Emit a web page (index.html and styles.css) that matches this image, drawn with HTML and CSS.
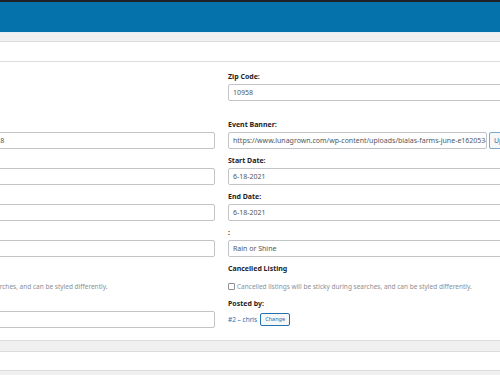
FILE: index.html
```html
<!DOCTYPE html>
<html>
<head>
<meta charset="utf-8">
<link rel="stylesheet" href="styles.css">
</head>
<body>
<div class="adminbar"></div>
<div class="masthead"></div>
<div class="tabs"></div>
<div class="panel-head"></div>
<div class="form">
  <div class="row row-first">
    <div class="cell"><div class="label">Location:</div></div>
    <div class="cell">
      <div class="label">Zip Code:</div>
      <div class="input">10958</div>
    </div>
  </div>
  <div class="row">
    <div class="cell">
      <div class="label">Event Title:</div>
      <div class="input">Strawberry Picking at Bialas Farms 06-18</div>
    </div>
    <div class="cell">
      <div class="label">Event Banner:</div>
      <div class="with-button">
        <div class="input">https://www.lunagrown.com/wp-content/uploads/bialas-farms-june-e1620534</div>
        <div class="btn">Upload</div>
      </div>
    </div>
  </div>
  <div class="row">
    <div class="cell">
      <div class="label">Website:</div>
      <div class="input"></div>
    </div>
    <div class="cell">
      <div class="label">Start Date:</div>
      <div class="input">6-18-2021</div>
    </div>
  </div>
  <div class="row">
    <div class="cell">
      <div class="label">Phone:</div>
      <div class="input"></div>
    </div>
    <div class="cell">
      <div class="label">End Date:</div>
      <div class="input">6-18-2021</div>
    </div>
  </div>
  <div class="row">
    <div class="cell">
      <div class="label">Email:</div>
      <div class="input"></div>
    </div>
    <div class="cell">
      <div class="label">:</div>
      <div class="input">Rain or Shine</div>
    </div>
  </div>
  <div class="row">
    <div class="cell">
      <div class="label">Featured Listing</div>
      <div class="check-row"><span class="checkbox"></span><span class="desc">Featured listings will be sticky during searches, and can be styled differently.</span></div>
    </div>
    <div class="cell">
      <div class="label">Cancelled Listing</div>
      <div class="check-row"><span class="checkbox"></span><span class="desc">Cancelled listings will be sticky during searches, and can be styled differently.</span></div>
    </div>
  </div>
  <div class="row row-last">
    <div class="cell">
      <div class="label">Expiry Date:</div>
      <div class="input"></div>
    </div>
    <div class="cell">
      <div class="label">Posted by:</div>
      <div class="posted"><span class="author">#2 – chris</span><span class="change">Change</span></div>
    </div>
  </div>
</div>
<div class="footer-band"></div>
<div class="footer-panel"></div>
<div class="footer-rest"></div>
</body>
</html>
```
FILE: styles.css
```css
html, body {
  margin: 0;
  padding: 0;
  background: #ffffff;
  overflow: hidden;
  font-family: "Noto Sans", "Open Sans", sans-serif;
}
.adminbar {
  height: 2px;
  background: #1d2327;
}
.masthead {
  height: 30px;
  background: #0572ab;
}
.tabs {
  height: 8px;
  background: #f0f0f1;
  border-top: 1px solid #e3edf4;
  border-bottom: 1px solid #dcdcde;
}
.panel-head {
  height: 19px;
  background: #ffffff;
  border-bottom: 1px solid #dcdcde;
}
.form {
  margin-left: -134px;
  padding-top: 10px;
  padding-bottom: 12px;
  width: 711px;
}
.row {
  display: grid;
  grid-template-columns: 349px 349px;
  column-gap: 13px;
  margin-bottom: 7px;
}
.row-first {
  height: 41px;
}
.row-last {
  margin-bottom: 0;
}
.cell {
  min-width: 0;
}
.label {
  height: 10px;
  line-height: 10px;
  font-size: 7px;
  font-weight: 700;
  color: #1d2327;
  margin-bottom: 2px;
  white-space: nowrap;
}
.input {
  box-sizing: border-box;
  height: 17px;
  line-height: 15px;
  border: 1px solid #c3c4c7;
  border-radius: 2px;
  padding: 0 4px;
  font-size: 7px;
  color: #50575e;
  white-space: nowrap;
  overflow: hidden;
  background: #fff;
}
.with-button {
  display: flex;
  gap: 2px;
}
.with-button .input {
  width: 259px;
  flex: none;
}
.btn {
  box-sizing: border-box;
  height: 17px;
  line-height: 15px;
  border: 1px solid #7fa7cc;
  border-radius: 2px;
  padding: 0 4px;
  font-size: 7px;
  color: #2271b1;
  background: #f6f7f7;
  flex: none;
}
.check-row {
  display: flex;
  align-items: center;
  gap: 2px;
  height: 12px;
  margin-top: 6px;
}
.checkbox {
  box-sizing: border-box;
  width: 7px;
  height: 7px;
  border: 1px solid #8c8f94;
  border-radius: 1px;
  flex: none;
}
.desc {
  font-size: 6.5px;
  color: #8c8f94;
  white-space: nowrap;
}
.posted {
  display: flex;
  align-items: center;
  gap: 3px;
  height: 17px;
}
.author {
  font-size: 6.5px;
  color: #2271b1;
}
.change {
  box-sizing: border-box;
  height: 13px;
  line-height: 11px;
  border: 1px solid #2271b1;
  border-radius: 2px;
  padding: 0 4px;
  font-size: 5.5px;
  color: #2271b1;
  background: #f6f7f7;
}
.footer-band {
  height: 10px;
  background: #f0f0f1;
  border-top: 1px solid #dcdcde;
  border-bottom: 1px solid #dcdcde;
}
.footer-panel {
  height: 18px;
  background: #fff;
  border-bottom: 1px solid #dcdcde;
}
.footer-rest {
  height: 20px;
  background: #f0f0f1;
}
```
